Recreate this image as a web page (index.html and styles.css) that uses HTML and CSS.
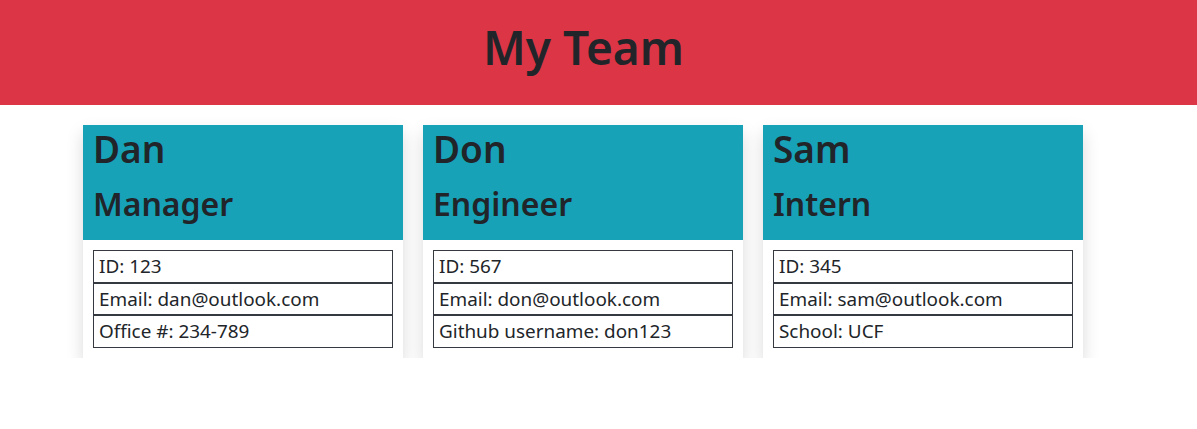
FILE: index.html
```html
<!DOCTYPE html>
<html lang="en">
<head>
<meta charset="utf-8">
<title>My Team</title>
<link rel="stylesheet" href="styles.css">
</head>
<body>
<header class="hero">
  <h1 class="hero-title">My Team</h1>
</header>
<main class="team">
  <section class="card">
    <div class="card-head">
      <h2 class="card-name">Dan</h2>
      <h3 class="card-role">Manager</h3>
    </div>
    <ul class="info">
      <li class="info-item">ID: 123</li>
      <li class="info-item">Email: dan@outlook.com</li>
      <li class="info-item">Office #: 234-789</li>
    </ul>
  </section>
  <section class="card">
    <div class="card-head">
      <h2 class="card-name">Don</h2>
      <h3 class="card-role">Engineer</h3>
    </div>
    <ul class="info">
      <li class="info-item">ID: 567</li>
      <li class="info-item">Email: don@outlook.com</li>
      <li class="info-item">Github username: don123</li>
    </ul>
  </section>
  <section class="card">
    <div class="card-head">
      <h2 class="card-name">Sam</h2>
      <h3 class="card-role">Intern</h3>
    </div>
    <ul class="info">
      <li class="info-item">ID: 345</li>
      <li class="info-item">Email: sam@outlook.com</li>
      <li class="info-item">School: UCF</li>
    </ul>
  </section>
</main>
</body>
</html>
```
FILE: styles.css
```css
* { box-sizing: border-box; }
body {
  margin: 0;
  font-family: "Noto Sans", "Open Sans", sans-serif;
  color: #212529;
  background: #fff;
}
.hero {
  background: #dc3545;
  padding: 18px 30px 29px 0;
  text-align: center;
}
.hero-title {
  margin: 0;
  font-size: 46px;
  line-height: 58px;
  font-weight: 600;
}
.team {
  display: flex;
  gap: 20px;
  padding: 20px 0 0 83px;
}
.card {
  width: 320px;
  background: #fff;
  box-shadow: 0 8px 16px rgba(0,0,0,0.15);
  padding-bottom: 10px;
}
.card-head {
  background: #17a2b8;
  padding: 0 10px 7px;
}
.card-name {
  margin: 0 0 9px;
  font-size: 37px;
  line-height: 48px;
  font-weight: 600;
}
.card-role {
  margin: 0 0 8px;
  font-size: 32px;
  line-height: 43px;
  font-weight: 600;
}
.info {
  list-style: none;
  margin: 10px 10px 0;
  padding: 0;
}
.info-item {
  border: 1px solid #343a40;
  padding: 0 5px;
  font-size: 18.9px;
  line-height: 30.7px;
}
```
